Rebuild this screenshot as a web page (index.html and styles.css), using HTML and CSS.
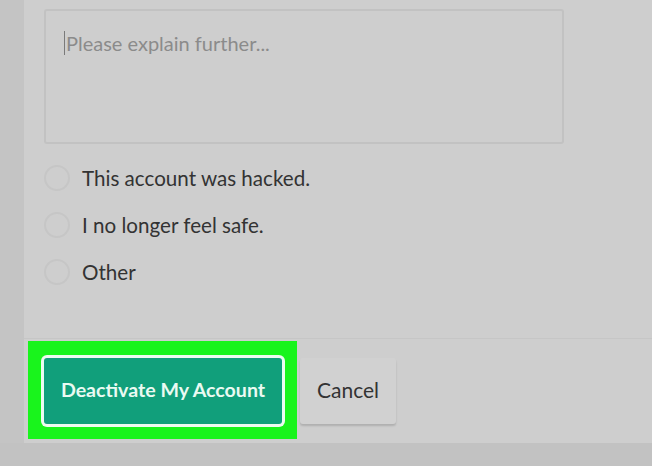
FILE: index.html
```html
<html>
    <head>
        <meta charset="utf-8">
        <title>Deactivate account</title>
        <link rel="stylesheet" href="styles.css">
    </head>
    <body>
        <div id="wrap">
            <div id="gutter"></div>
            <div id="panel">
                <div id="form">
                    <div class="explain"><span class="caret"></span>Please explain further...</div>
                    <div class="options">
                        <label class="option"><span class="radio"></span>This account was hacked.</label>
                        <label class="option"><span class="radio"></span>I no longer feel safe.</label>
                        <label class="option"><span class="radio"></span>Other</label>
                    </div>
                </div>
                <div id="footer">
                    <div class="highlight">
                        <div class="btn_primary">Deactivate My Account</div>
                    </div>
                    <div class="btn_cancel">Cancel</div>
                </div>
            </div>
        </div>
        <div id="bottom"></div>
    </body>
</html>
```

FILE: styles.css
```css
body {
    margin: 0;
    background: #c3c3c3;
    font-family: Lato, "Open Sans", sans-serif;
    width: 652px;
    height: 466px;
    overflow: hidden;
}
#wrap {
    display: flex;
    height: 443px;
}
#gutter {
    width: 24px;
    background: #c4c4c4;
}
#panel {
    flex: 1;
    background: #cecece;
    display: flex;
    flex-direction: column;
}
#form {
    padding: 9px 0 0 20px;
    height: 339px;
    box-sizing: border-box;
    border-bottom: 1px solid #c6c6c6;
}
.explain {
    width: 520px;
    height: 135px;
    box-sizing: border-box;
    border: 2px solid #c2c2c2;
    border-radius: 3px;
    padding: 20px 18px;
    font-size: 20px;
    color: #8b8b8b;
    display: flex;
    align-items: flex-start;
}
.caret {
    width: 1px;
    height: 24px;
    background: #7a7a7a;
    margin-right: 1px;
}
.options {
    padding-top: 21px;
    display: flex;
    flex-direction: column;
    gap: 21px;
}
.option {
    display: flex;
    align-items: center;
    height: 26px;
    font-size: 20.6px;
    color: #333333;
}
.radio {
    width: 22px;
    height: 22px;
    border: 2px solid #c6c6c6;
    border-radius: 50%;
    margin-right: 12px;
}
#footer {
    display: flex;
    align-items: flex-start;
    padding: 2px 0 0 4px;
    gap: 3px;
}
.highlight {
    background: #19f41c;
    padding: 17px 15px 15px 16px;
}
.btn_primary {
    width: 238px;
    height: 66px;
    box-sizing: border-box;
    padding-bottom: 3px;
    background: #119f7b;
    border-radius: 3px;
    box-shadow: 0 0 0 3px #eefbf0;
    color: #eafaf2;
    font-size: 19.6px;
    font-weight: bold;
    display: flex;
    align-items: center;
    justify-content: center;
}
.btn_cancel {
    width: 96px;
    height: 66px;
    margin-top: 17px;
    box-sizing: border-box;
    padding-bottom: 4px;
    background: #d1d1d1;
    border-radius: 3px;
    box-shadow: 0 2px 2px rgba(0, 0, 0, 0.15);
    color: #333333;
    font-size: 21px;
    display: flex;
    align-items: center;
    justify-content: center;
}
#bottom {
    height: 23px;
    background: #c2c2c2;
}
```
